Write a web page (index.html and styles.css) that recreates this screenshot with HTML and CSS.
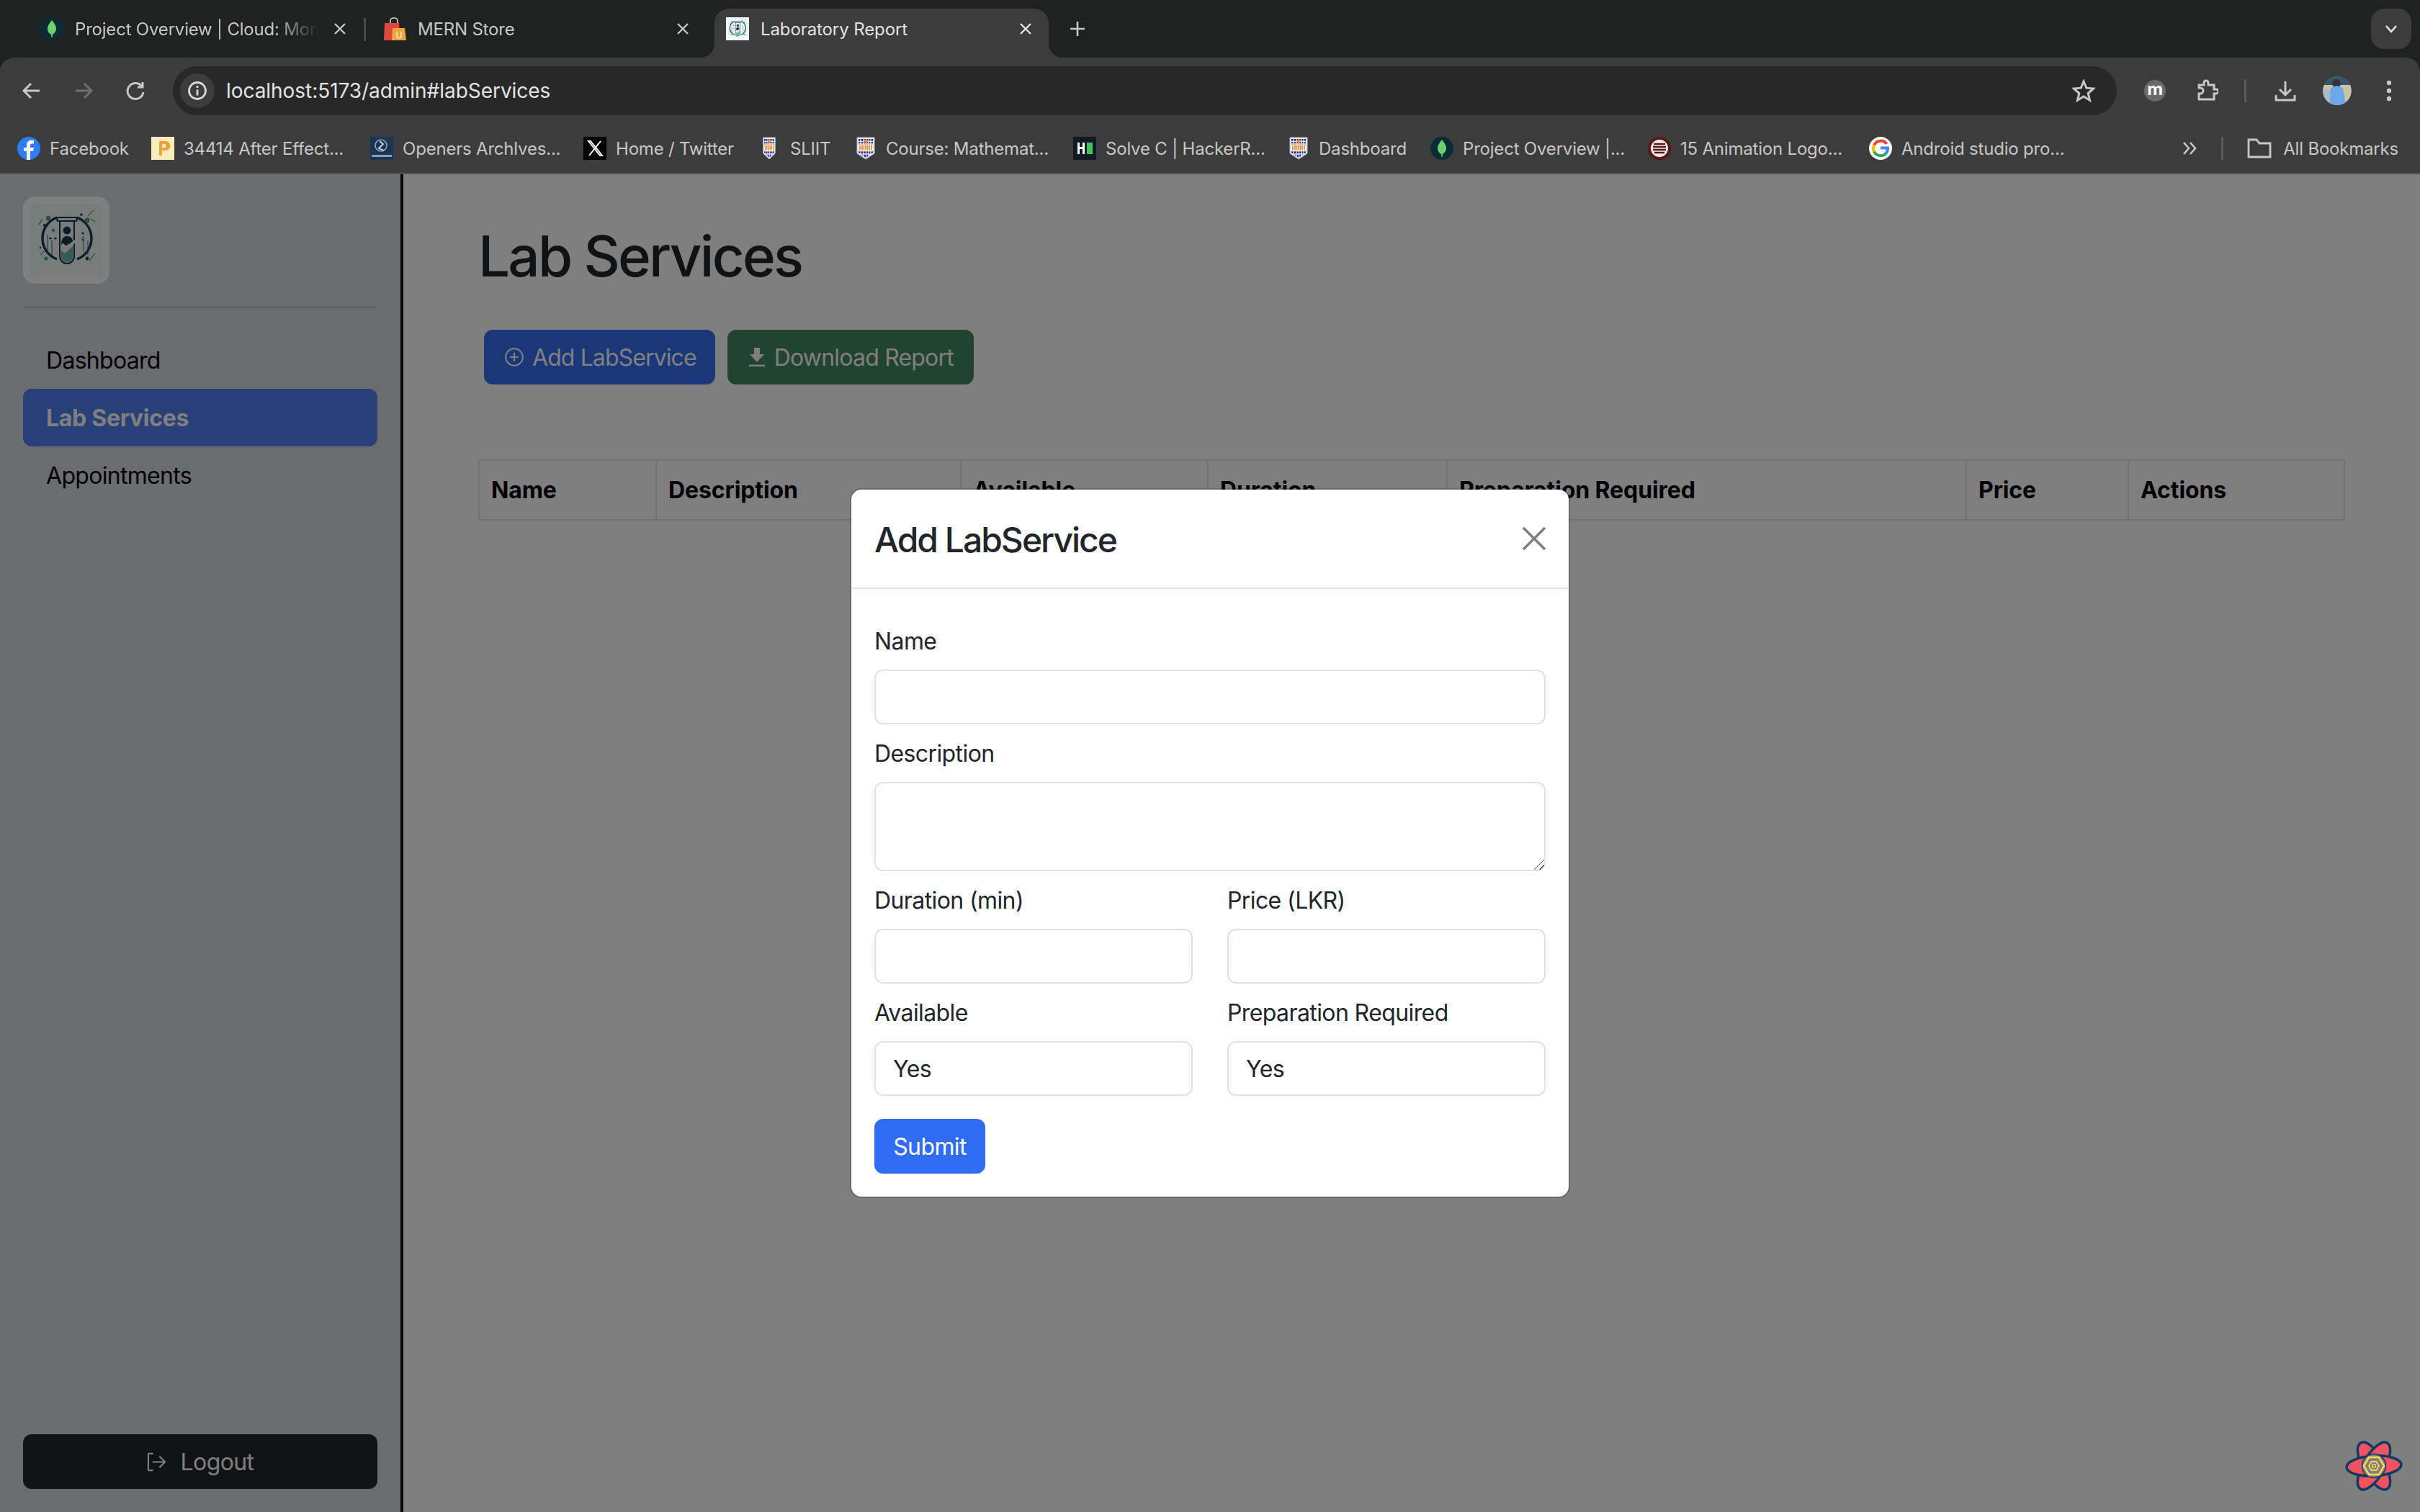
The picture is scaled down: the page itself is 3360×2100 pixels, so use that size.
FILE: index.html
```html
<!DOCTYPE html>
<html lang="en">
<head>
<meta charset="utf-8">
<title>Laboratory Report</title>
<link rel="stylesheet" href="styles.css">
</head>
<body>
<svg class="defs" width="0" height="0" aria-hidden="true">
  <defs>
    <symbol id="mongo" viewBox="0 0 32 32">
      <ellipse cx="16" cy="16" rx="16" ry="16" fill="#0b2b35"/>
      <path d="M16 4c4 5 6 8 6 12 0 4-3 7-5 8l-.5 4h-1l-.5-4c-2-1-5-4-5-8 0-4 2-7 6-12z" fill="#6bd06f"/>
    </symbol>
    <symbol id="shield" viewBox="0 0 26 32" preserveAspectRatio="none">
      <path d="M1 1h24v22L13 31 1 23z" fill="#e8e8f2" stroke="#b9bbd6" stroke-width="1"/>
      <path d="M3 3h20v19L13 29 3 22z" fill="#262a7c"/>
      <path d="M6 3v21M10 3v25M13.500 3v26M17 3v25M20 3v21M3 6.500h20M3 10h20M3 24h20M3 19.500h20" stroke="#e8e8f2" stroke-width="1.300" fill="none"/>
      <rect x="3" y="11" width="20" height="8" fill="#fff"/>
      <path d="M5 11.500v7M8 11.500v7M10.500 11.500v7M13 11.500v7M15.500 11.500v7M18 11.500v7M21 11.500v7" stroke="#ee8a2e" stroke-width="1.700"/>
      <rect x="10.500" y="4" width="5" height="4" fill="#ee8a2e"/>
    </symbol>
    <symbol id="lablogo" viewBox="0 0 100 100">
      <rect width="100" height="100" fill="#f0fbf9"/>
      <path d="M37 76A31 31 0 0 1 37 18M65 18A31 31 0 0 1 65 76" fill="none" stroke="#17394a" stroke-width="3.400"/>
      <path d="M12 28l5-8M80 16l8-8M90 24l-6-4M14 70l8-8M82 78l8-10M24 42v24M30 50v22M74 44v22M80 50v20" stroke="#35606a" stroke-width="1" fill="none"/>
      <circle cx="25" cy="19" r="3.200" fill="#4aa095"/><circle cx="20" cy="29" r="2" fill="#17394a"/>
      <circle cx="79" cy="22" r="3.400" fill="#4aa095"/><circle cx="71" cy="14" r="1.800" fill="#17394a"/>
      <circle cx="32" cy="36" r="2.200" fill="#4aa095"/><circle cx="28" cy="47" r="1.600" fill="#17394a"/>
      <circle cx="35" cy="47" r="1.600" fill="#17394a"/><circle cx="73" cy="40" r="1.600" fill="#17394a"/>
      <circle cx="73" cy="49" r="2" fill="#4aa095"/><circle cx="22" cy="75" r="2.600" fill="#4aa095"/>
      <circle cx="79" cy="75" r="2.400" fill="#17394a"/><circle cx="14" cy="60" r="1.200" fill="#17394a"/><circle cx="84" cy="56" r="1.200" fill="#17394a"/>
      <rect x="37" y="18" width="28" height="5" rx="2.500" fill="#f0fbf9" stroke="#17394a" stroke-width="2"/>
      <path d="M41 23v49a10 10 0 0 0 20 0V23z" fill="#f0fbf9" stroke="#17394a" stroke-width="2"/>
      <path d="M43 64l5 4 11-10v14a8 8 0 0 1-16 0z" fill="#6fb5a5"/>
      <circle cx="51" cy="36" r="5.400" fill="#17394a"/>
      <path d="M43 56c0-8 3-12 8-12s8 3 8 8l-11 6z" fill="#17394a"/>
      <path d="M44 55l6 6 16-13" fill="none" stroke="#f0fbf9" stroke-width="4"/>
    </symbol>
  </defs>
</svg>

<header class="chrome">
  <div class="tabstrip">
    <div class="tab">
      <svg class="fav"><use href="#mongo"/></svg>
      <span class="tab-title tab-title-fade">Project Overview | Cloud: Mon</span>
      <svg class="tab-x" viewBox="0 0 20 20"><path d="M3 3l14 14M17 3L3 17"/></svg>
      <i class="tab-sep"></i>
    </div>
    <div class="tab">
      <svg class="fav" viewBox="0 0 32 32">
        <path d="M10 8V5a4 4 0 0 1 4-4h2a4 4 0 0 1 4 4v3" fill="none" stroke="#d8d8d8" stroke-width="1.600"/>
        <path d="M2 8h20l2 24H1z" fill="#e0483e"/><path d="M13 15h17l2 17H12z" fill="#eea53b"/>
        <path d="M19 20v6a3 3 0 0 0 6 0v-6" fill="none" stroke="#fff" stroke-width="1.200"/>
      </svg>
      <span class="tab-title">MERN Store</span>
      <svg class="tab-x" viewBox="0 0 20 20"><path d="M3 3l14 14M17 3L3 17"/></svg>
    </div>
    <div class="tab tab-active">
      <svg class="fav"><use href="#lablogo"/></svg>
      <span class="tab-title">Laboratory Report</span>
      <svg class="tab-x" viewBox="0 0 20 20"><path d="M3 3l14 14M17 3L3 17"/></svg>
    </div>
    <svg class="newtab" viewBox="0 0 22 22"><path d="M11 1v20M1 11h20"/></svg>
    <div class="tab-search"><svg viewBox="0 0 18 12"><path d="M2 2l7 8 7-8"/></svg></div>
  </div>

  <div class="toolbar">
    <div class="nav-icons">
      <svg class="tool-ic" viewBox="0 0 32 32"><path d="M27 16H6M15 6L5 16l10 10"/></svg>
      <svg class="tool-ic tool-dim" viewBox="0 0 32 32"><path d="M5 16h21M17 6l10 10-10 10"/></svg>
      <svg class="tool-ic" viewBox="0 0 32 32"><path d="M25 10a11 11 0 1 0 2 8M26 4v7h-7"/></svg>
    </div>
    <div class="omnibox">
      <span class="site-info"><svg viewBox="0 0 28 28"><circle cx="14" cy="14" r="11.500"/><path d="M14 12.500v8M14 7v3"/></svg></span>
      <span class="url">localhost:5173/admin#labServices</span>
      <svg class="star" viewBox="0 0 32 32"><path d="M16 3l3.800 9.200 9.900.8-7.500 6.500 2.300 9.700L16 24l-8.500 5.200 2.300-9.700L2.300 13l9.900-.8z"/></svg>
    </div>
    <div class="tool-right">
      <span class="ext-m">m</span>
      <svg class="tool-ic puzzle" viewBox="0 0 32 32"><path d="M5 8h7V5a3 3 0 0 1 6 0v3h8v6h3a3 3 0 0 1 0 6h-3v8H5v-8h2a4 4 0 0 0 0-8H5z"/></svg>
      <i class="tool-sep"></i>
      <svg class="tool-ic download" viewBox="0 0 32 32"><path d="M16 3v19M8 14l8 8 8-8M3 22v7h26v-7"/></svg>
      <svg class="avatar" viewBox="0 0 40 40">
        <circle cx="20" cy="20" r="20" fill="#c9c4a8"/>
        <path d="M0 0h40v12H0z" fill="#37566a"/>
        <circle cx="19" cy="10" r="6" fill="#33333a"/>
        <path d="M8 40l3-24 8-3 9 3 4 24z" fill="#6fa8e8"/>
        <path d="M0 18h10v22H0z" fill="#a9bcc4"/>
      </svg>
      <svg class="dots" viewBox="0 0 8 32"><circle cx="4" cy="5" r="3.200"/><circle cx="4" cy="16" r="3.200"/><circle cx="4" cy="27" r="3.200"/></svg>
    </div>
  </div>

  <nav class="bookmarks">
    <a class="bm bm-a"><svg class="bm-ic" viewBox="0 0 32 32"><circle cx="16" cy="16" r="16" fill="#2f7cf6"/><path d="M18 32V20h4l1-5h-5v-3c0-1.500.7-2.500 2.600-2.500H23V5c-1-.2-2.300-.3-3.600-.3-3.700 0-6.400 2.200-6.400 6.500V15H9v5h4v12z" fill="#fff"/></svg><span>Facebook</span></a>
    <a class="bm bm-b"><svg class="bm-ic" viewBox="0 0 32 32"><rect width="32" height="32" fill="#f9edc0"/><path d="M11 26V6h9a6 6 0 0 1 0 13h-5v7z" fill="#eda23c"/><rect x="15" y="10" width="5" height="5" fill="#f9edc0"/></svg><span>34414 After Effect...</span></a>
    <a class="bm bm-c"><svg class="bm-ic" viewBox="0 0 32 32"><rect width="32" height="32" fill="#1b3555"/><circle cx="15" cy="12" r="8" fill="none" stroke="#8fa2b4" stroke-width="1.600"/><path d="M13 6l5 4-6 6 7 3" fill="none" stroke="#cfd8e0" stroke-width="1.800"/><rect x="2" y="25" width="28" height="3" fill="#8ba0b5"/></svg><span>Openers Archlves...</span></a>
    <a class="bm bm-d"><svg class="bm-ic" viewBox="0 0 32 32"><rect width="32" height="32" fill="#000"/><path d="M7 6l16 20h3L10 6zM24 6L8 26" fill="none" stroke="#fff" stroke-width="2"/></svg><span>Home / Twitter</span></a>
    <a class="bm bm-e"><svg class="bm-sh bm-sh-narrow"><use href="#shield"/></svg><span>SLIIT</span></a>
    <a class="bm bm-f"><svg class="bm-sh"><use href="#shield"/></svg><span>Course: Mathemat...</span></a>
    <a class="bm bm-g"><svg class="bm-ic" viewBox="0 0 32 32"><rect width="32" height="32" fill="#111a24"/><path d="M6 8h3v6h4V8h3v16h-3v-7H9v7H6z" fill="#fff"/><rect x="19" y="8" width="8" height="16" fill="#3fc35a"/></svg><span>Solve C | HackerR...</span></a>
    <a class="bm bm-h"><svg class="bm-sh"><use href="#shield"/></svg><span>Dashboard</span></a>
    <a class="bm bm-i"><svg class="bm-ic"><use href="#mongo"/></svg><span>Project Overview |...</span></a>
    <a class="bm bm-j"><svg class="bm-ic" viewBox="0 0 32 32"><circle cx="16" cy="16" r="16" fill="#5a1618"/><circle cx="16" cy="16" r="12" fill="#f4eded"/><path d="M8 10h16M7 14h18M7 18h18M9 22h14" stroke="#5a1618" stroke-width="2.600"/></svg><span>15 Animation Logo...</span></a>
    <a class="bm bm-k"><svg class="bm-ic" viewBox="0 0 32 32"><circle cx="16" cy="16" r="16" fill="#fff"/><path d="M24.500 10A10 10 0 0 0 7.100 11.500" fill="none" stroke="#ea4335" stroke-width="4"/><path d="M7.100 11.500a10 10 0 0 0 0 9" fill="none" stroke="#fbbc05" stroke-width="4"/><path d="M7.100 20.500A10 10 0 0 0 23 23.500" fill="none" stroke="#34a853" stroke-width="4"/><path d="M23 23.500A10 10 0 0 0 26 15.500H16" fill="none" stroke="#4285f4" stroke-width="4"/></svg><span>Android studio pro...</span></a>
    <div class="bm-end">
      <svg class="bm-more" viewBox="0 0 22 22"><path d="M3 3l7 8-7 8M12 3l7 8-7 8"/></svg>
      <i class="bm-sep"></i>
      <svg class="bm-folder" viewBox="0 0 34 32"><path d="M2 28V4h11l4 5h15v19z"/></svg>
      <span>All Bookmarks</span>
    </div>
  </nav>
</header>

<div class="page">
  <aside class="sidebar">
    <div class="brand"><svg class="brand-img"><use href="#lablogo"/></svg></div>
    <hr class="side-rule">
    <ul class="side-nav">
      <li class="side-item">Dashboard</li>
      <li class="side-item side-active">Lab Services</li>
      <li class="side-item">Appointments</li>
    </ul>
    <button class="btn btn-dark" type="button">
      <svg class="ic-logout" viewBox="0 0 28 28"><path d="M9 2H3.500a1.500 1.500 0 0 0-1.500 1.500v21A1.500 1.500 0 0 0 3.500 26H9M8 14h18M18 6l8 8-8 8"/></svg>
      Logout
    </button>
  </aside>

  <main class="main">
    <h1 class="title">Lab Services</h1>
    <div class="actions">
      <button class="btn btn-primary" type="button">
        <svg class="ic-add" viewBox="0 0 26 26"><circle cx="13" cy="13" r="11.800"/><path d="M13 7v12M7 13h12"/></svg>
        Add LabService
      </button>
      <button class="btn btn-success" type="button">
        <svg class="ic-down" viewBox="0 0 22 26"><path d="M7 0h8v9h6L11 20 1 9h6zM0 23.500h22V26H0z"/></svg>
        Download Report
      </button>
    </div>
    <table class="grid">
      <thead>
        <tr>
          <th class="c-name">Name</th>
          <th class="c-desc">Description</th>
          <th class="c-avail">Available</th>
          <th class="c-dur">Duration</th>
          <th class="c-prep">Preparation Required</th>
          <th class="c-price">Price</th>
          <th class="c-act">Actions</th>
        </tr>
      </thead>
    </table>
  </main>

  <div class="backdrop">
    <section class="modal" role="dialog" aria-label="Add LabService">
      <div class="modal-head">
        <h2 class="modal-title">Add LabService</h2>
        <svg class="modal-close" viewBox="0 0 32 32"><path d="M1 1l30 30M31 1L1 31"/></svg>
      </div>
      <form class="modal-body">
        <div class="field"><label class="label">Name</label><input class="control" type="text"></div>
        <div class="field"><label class="label">Description</label><textarea class="control area" rows="2"></textarea></div>
        <div class="two">
          <div class="field"><label class="label">Duration (min)</label><input class="control" type="text"></div>
          <div class="field"><label class="label">Price (LKR)</label><input class="control" type="text"></div>
        </div>
        <div class="two">
          <div class="field"><label class="label">Available</label><select class="control pick"><option>Yes</option><option>No</option></select></div>
          <div class="field"><label class="label">Preparation Required</label><select class="control pick"><option>Yes</option><option>No</option></select></div>
        </div>
        <button class="btn btn-submit" type="button">Submit</button>
      </form>
    </section>
  </div>

  <svg class="rq-logo" viewBox="0 0 80 80">
    <g fill="#ef5361" stroke="#0f3a5f" stroke-width="3.500">
      <ellipse cx="40" cy="40" rx="37" ry="15" transform="rotate(60 40 40)"/>
      <ellipse cx="40" cy="40" rx="37" ry="15" transform="rotate(120 40 40)"/>
      <ellipse cx="40" cy="40" rx="38" ry="14" transform="rotate(-3 40 40)"/>
    </g>
    <circle cx="40" cy="40" r="16.500" fill="#7f7f80" stroke="#0f3a5f" stroke-width="1.500"/>
    <path d="M26 40l7-12h14l7 12-7 12H33z" fill="none" stroke="#ffd94c" stroke-width="2.600"/>
    <path d="M33 40l3.500-6h7l3.500 6-3.500 6h-7z" fill="none" stroke="#ffd94c" stroke-width="1.800"/>
    <circle cx="40" cy="40" r="2.400" fill="none" stroke="#ffd94c" stroke-width="1.400"/>
  </svg>
</div>
</body>
</html>
```
FILE: styles.css
```css
* { box-sizing: border-box; }
html, body { margin: 0; height: 100%; }
body {
  width: 3360px;
  height: 2100px;
  overflow: hidden;
  display: flex;
  flex-direction: column;
  font-family: Inter, "Liberation Sans", sans-serif;
  color: #212529;
  background: #fff;
}
.defs { position: absolute; }

/* browser chrome */
.chrome { flex: 0 0 242px; background: #202221; color: #c7c7c7; font-size: 24px; letter-spacing: -.2px; }
.tabstrip { height: 80px; padding: 12px 12px 0 32px; display: flex; align-items: stretch; }
.tab { position: relative; width: 476px; display: flex; align-items: center; padding: 0 26px 12px 24px; }
.fav { width: 32px; height: 32px; flex: none; margin-right: 16px; }
.tab-title { flex: 1; min-width: 0; white-space: nowrap; }
.tab-title-fade { -webkit-mask-image: linear-gradient(90deg, #000 82%, transparent 100%); mask-image: linear-gradient(90deg, #000 82%, transparent 100%); }
.tab-x { width: 20px; height: 20px; flex: none; margin-left: 20px; fill: none; stroke: #c7c7c7; stroke-width: 2.400; }
.tab-sep { position: absolute; right: 0; top: 13px; width: 3px; height: 32px; background: #4a4a4a; }
.tab-active { width: 464px; margin-left: 8px; padding: 0 22px 12px 16px; background: #3c3c3c; border-radius: 20px 20px 0 0; color: #e3e3e3; letter-spacing: -.1px; }
.tab-active::before, .tab-active::after { content: ""; position: absolute; bottom: 0; width: 20px; height: 20px; }
.tab-active::before { left: -20px; background: radial-gradient(circle at 0 0, transparent 20px, #3c3c3c 20.500px); }
.tab-active::after { right: -20px; background: radial-gradient(circle at 100% 0, transparent 20px, #3c3c3c 20.500px); }
.tab-active .tab-x { stroke: #e3e3e3; }
.newtab { width: 22px; height: 22px; margin: 17px 0 0 29px; fill: none; stroke: #c7c7c7; stroke-width: 2.600; }
.tab-search { margin-left: auto; width: 56px; height: 56px; border-radius: 18px; background: #3c3c3c; display: flex; align-items: center; justify-content: center; }
.tab-search svg { width: 18px; height: 12px; fill: none; stroke: #e3e3e3; stroke-width: 2.600; }

.toolbar { height: 80px; background: #3c3c3c; border-radius: 20px 20px 0 0; padding: 12px 0 0 28px; display: flex; align-items: stretch; }
.nav-icons { display: flex; gap: 40px; align-items: center; width: 212px; }
.tool-ic { width: 32px; height: 32px; flex: none; fill: none; stroke: #c7c7c7; stroke-width: 3; }
.tool-dim { stroke: #6f6f6f; }
.omnibox { width: 2699px; height: 68px; background: #282828; border-radius: 34px; display: flex; align-items: center; padding: 0 30px 0 10px; color: #e3e3e3; font-size: 28px; }
.site-info { width: 48px; height: 48px; border-radius: 50%; background: #3c3c3c; display: flex; align-items: center; justify-content: center; }
.site-info svg { width: 28px; height: 28px; fill: none; stroke: #d8d8d8; stroke-width: 2.800; }
.url { margin-left: 16px; flex: 1; letter-spacing: -.05px; }
.star { width: 32px; height: 32px; fill: none; stroke: #c7c7c7; stroke-width: 3; }
.tool-right { flex: 1; display: flex; align-items: center; padding-left: 38px; }
.ext-m { width: 30px; height: 30px; border-radius: 50%; background: #6a6a6a; color: #fff; font-size: 24px; font-weight: 700; line-height: 26px; text-align: center; }
.puzzle { margin-left: 41px; }
.tool-sep { width: 3px; height: 32px; background: #5a5a5a; margin: 0 38px 0 36px; }
.avatar { width: 40px; height: 40px; border-radius: 50%; margin-left: 36px; }
.dots { width: 8px; height: 32px; fill: #c7c7c7; margin-left: 48px; }

.bookmarks { height: 82px; background: #3c3c3c; border-bottom: 2px solid #555; padding: 30px 30px 0 24px; display: flex; align-items: flex-start; }
.bm { display: flex; align-items: center; height: 32px; white-space: nowrap; flex: none; }
.bm-ic { width: 32px; height: 32px; flex: none; margin-right: 13px; }
.bm-sh { width: 26px; height: 32px; flex: none; margin-right: 15px; }
.bm-sh-narrow { width: 18px; margin-right: 20px; }
.bm-a { width: 186px; }
.bm-b { width: 304px; }
.bm-c { width: 296px; }
.bm-d { width: 249px; }
.bm-e { width: 130px; }
.bm-f { width: 301px; }
.bm-g { width: 300px; }
.bm-h { width: 196px; }
.bm-i { width: 302px; }
.bm-j { width: 307px; }
.bm-k { width: 300px; }
.bm-end { margin-left: auto; display: flex; align-items: center; height: 32px; }
.bm-more { width: 22px; height: 22px; fill: none; stroke: #c7c7c7; stroke-width: 2.600; }
.bm-sep { width: 3px; height: 32px; background: #5a5a5a; margin: 0 33px; }
.bm-folder { width: 34px; height: 32px; fill: none; stroke: #c7c7c7; stroke-width: 2.800; margin-right: 16px; }

/* app */
.page { position: relative; flex: 1; display: flex; min-height: 0; }
.sidebar { flex: 0 0 560px; padding: 31px 32px 32px; background: #d6d8de; border-right: 4px solid #000; display: flex; flex-direction: column; }
.brand { width: 120px; height: 121px; padding: 10px; background: #fff; border-radius: 16px; display: flex; align-items: center; }
.brand-img { width: 100px; height: 100px; }
.side-rule { margin: 32px 0 32px; border: 0; height: 2px; background: #bcbdc4; }
.side-nav { list-style: none; margin: 0 0 auto; padding: 0; }
.side-item { height: 80px; padding: 17px 32px 15px; font-size: 32px; line-height: 48px; color: #000; border-radius: 12px; letter-spacing: -.7px; }
.side-active { background: #5080f0; color: #fff; font-weight: 700; letter-spacing: -.3px; }

.main { flex: 1; min-width: 0; padding: 66px 104px 0; background: #fff; }
.title { margin: 0 0 54px; font-size: 78px; line-height: 96px; font-weight: 500; color: #212529; letter-spacing: -2.750px; }
.actions { display: flex; gap: 17px; margin: 0 0 104px 8px; }
.btn { height: 76px; border: 2px solid transparent; border-radius: 12px; padding: 2px 24px 0; font: inherit; font-size: 32px; line-height: 48px; letter-spacing: -.9px; color: #fff; display: flex; align-items: center; justify-content: center; white-space: nowrap; }
.btn-primary { background: #326ef2; }
.btn-success { background: #428860; padding-right: 26px; letter-spacing: -.8px; }
.btn-dark { background: #212529; width: 100%; letter-spacing: -.6px; }
.ic-add { width: 26px; height: 26px; margin: -2px 12px 0 3px; fill: none; stroke: #fff; stroke-width: 2.200; }
.ic-down { width: 22px; height: 26px; margin: -2px 13px 0 4px; fill: #fff; }
.ic-logout { width: 27px; height: 27px; margin: -2px 20px 0 0; fill: none; stroke: #fff; stroke-width: 2.200; }
.grid { table-layout: fixed; border-collapse: collapse; width: 2590px; }
.grid th { height: 83px; padding: 0 16px; border: 2px solid #dee2e6; font-size: 32px; font-weight: 700; text-align: left; color: #000; letter-spacing: -.1px; }
.c-name { width: 246px; }
.c-desc { width: 423px; }
.c-avail { width: 343px; }
.c-dur { width: 332px; }
.c-prep { width: 721px; }
.c-price { width: 225px; }
.c-act { width: 300px; }

/* modal */
.backdrop { position: absolute; inset: 0; background: rgba(0, 0, 0, .5); display: flex; align-items: center; justify-content: center; }
.modal { width: 1000px; background: #fff; border: 2px solid rgba(0, 0, 0, .175); border-radius: 16px; background-clip: padding-box; }
.modal-head { display: flex; align-items: center; justify-content: space-between; padding: 32px; border-bottom: 2px solid #dee2e6; }
.modal-title { margin: 0; padding-top: 4px; font-size: 48px; line-height: 68px; font-weight: 500; color: #212529; letter-spacing: -2px; }
.modal-close { width: 32px; height: 32px; fill: none; stroke: #808080; stroke-width: 3.500; }
.modal-body { padding: 32px; }
.field { margin-top: 16px; flex: 1; min-width: 0; }
.label { display: block; padding-top: 2px; font-size: 32px; line-height: 46px; margin-bottom: 16px; letter-spacing: -.6px; }
.control { display: block; width: 100%; height: 76px; padding: 12px 24px; font: inherit; font-size: 32px; line-height: 48px; color: #212529; background: #fff; border: 2px solid #dee2e6; border-radius: 12px; outline: 0; letter-spacing: -.6px; }
.area { height: 124px; resize: vertical; }
.area::-webkit-resizer { background: linear-gradient(135deg, transparent 50%, #555 50% 56%, transparent 56% 74%, #555 74% 80%, transparent 80%); }
.pick { appearance: none; -webkit-appearance: none; padding: 13px 24px 11px; }
.two { display: flex; gap: 48px; }
.btn-submit { margin-top: 32px; width: 154px; background: #316cf4; padding: 2px 0 0; letter-spacing: -.6px; }

.rq-logo { position: absolute; right: 24px; bottom: 24px; width: 80px; height: 80px; }
```
